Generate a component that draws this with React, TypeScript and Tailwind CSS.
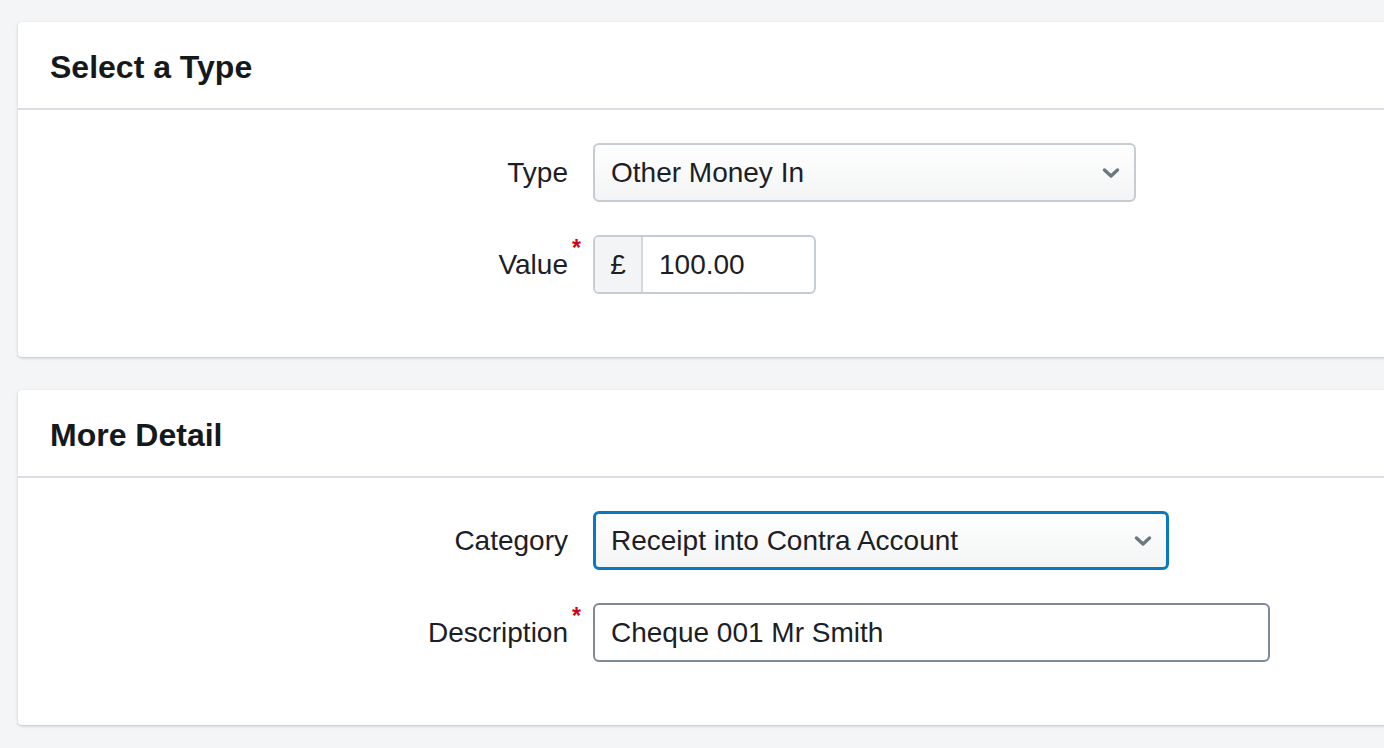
import React from "react";

const font = { fontFamily: '"Liberation Sans", Arial, Helvetica, sans-serif' };

function Chevron() {
  return (
    <svg width="18" height="11" viewBox="0 0 18 11" className="absolute right-[14px] top-1/2 -translate-y-1/2">
      <path d="M2.5 2.5 L9 8.5 L15.5 2.5" fill="none" stroke="#6b7883" strokeWidth="3.4" strokeLinecap="round" strokeLinejoin="round" />
    </svg>
  );
}

function Label({ text, required }: { text: string; required?: boolean }) {
  return (
    <div className="w-[550px] shrink-0 text-right pr-0">
      <span className="relative text-[28px] leading-[32px] text-[#1c2024]">
        {text}
        {required && (
          <span className="absolute right-[-13px] top-[-12px] text-[23px] font-bold leading-none text-[#d0021b]">*</span>
        )}
      </span>
    </div>
  );
}

function Card({ title, children }: { title: string; children: React.ReactNode }) {
  return (
    <div className="ml-[18px] w-[1420px] rounded-[4px] bg-white shadow-[0_1px_3px_rgba(0,0,0,0.22)]">
      <div className="border-b-2 border-[#dadee2] pl-[32px] pt-[27px] pb-[23px]">
        <h2 className="text-[32px] font-bold leading-[36px] text-[#16191c]">{title}</h2>
      </div>
      <div className="flex flex-col gap-[33px] pt-[33px] pb-[63px]">{children}</div>
    </div>
  );
}

export default function App() {
  return (
    <div style={font} className="min-h-[748px] w-[1384px] overflow-hidden bg-[#f4f5f7] pt-[22px]">
      <Card title="Select a Type">
        <div className="flex items-center gap-[25px]">
          <Label text="Type" />
          <div className="relative flex h-[59px] w-[543px] items-center rounded-[6px] border-2 border-[#c5ccd2] bg-gradient-to-b from-white to-[#f3f4f5] pl-[16px]">
            <span className="text-[28px] leading-[32px] text-[#1c2024]">Other Money In</span>
            <Chevron />
          </div>
        </div>
        <div className="flex items-center gap-[25px]">
          <Label text="Value" required />
          <div className="flex h-[59px] w-[223px] overflow-hidden rounded-[6px] border-2 border-[#c5ccd2] bg-white">
            <div className="flex w-[48px] items-center justify-center border-r-2 border-[#d3d8dd] bg-[#f3f4f6]">
              <span className="text-[28px] leading-[32px] text-[#1c2024]">£</span>
            </div>
            <div className="flex items-center pl-[16px]">
              <span className="text-[28px] leading-[32px] text-[#1c2024]">100.00</span>
            </div>
          </div>
        </div>
      </Card>
      <div className="h-[33px]" />
      <Card title="More Detail">
        <div className="flex items-center gap-[25px]">
          <Label text="Category" />
          <div className="relative flex h-[59px] w-[576px] items-center rounded-[6px] border-[3px] border-[#0a78c2] bg-gradient-to-b from-white to-[#f3f4f5] pl-[15px]">
            <span className="text-[28px] leading-[32px] text-[#1c2024]">Receipt into Contra Account</span>
            <Chevron />
          </div>
        </div>
        <div className="flex items-center gap-[25px]">
          <Label text="Description" required />
          <div className="flex h-[59px] w-[677px] items-center rounded-[6px] border-2 border-[#7d8994] bg-white pl-[16px]">
            <span className="text-[28px] leading-[32px] text-[#1c2024]">Cheque 001 Mr Smith</span>
          </div>
        </div>
      </Card>
    </div>
  );
}
